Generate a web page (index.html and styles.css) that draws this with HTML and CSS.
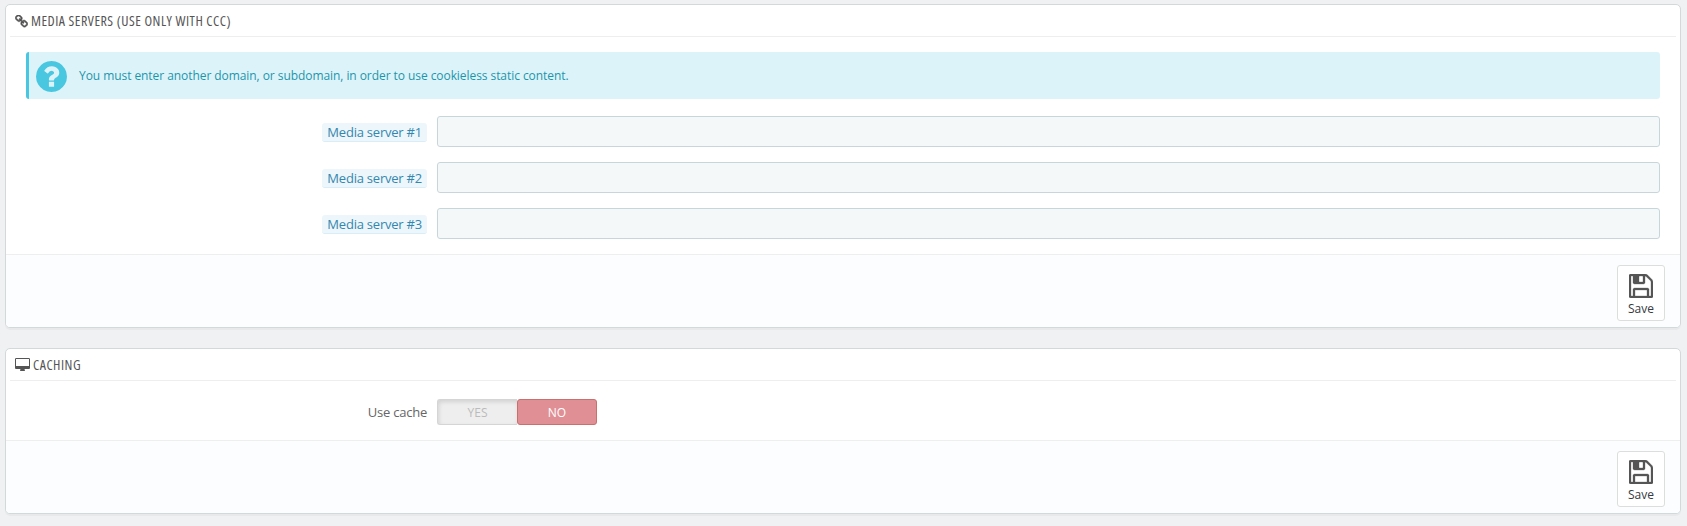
FILE: index.html
```html
<!DOCTYPE html>
<html lang="en">
<head>
    <meta charset="UTF-8">
    <meta name="viewport" content="width=device-width, initial-scale=1.0">
    <title>Performance</title>
    <link rel="stylesheet" href="styles.css">
</head>
<body>
    <form class="panel">
        <h3 class="panel-heading">
            <svg class="icon-link" viewBox="64 80 1664 1664"><path d="M1520 1216q0-40-28-68l-208-208q-28-28-68-28-42 0-72 32 3 3 19 18.500t21.500 21.500 15 19 13 25.500 3.500 27.500q0 40-28 68t-68 28q-15 0-27.500-3.500t-25.500-13-19-15-21.500-21.500-18.500-19q-33 31-33 73 0 40 28 68l206 207q27 27 68 27 40 0 68-26l147-146q28-28 28-67zm-703-705q0-40-28-68l-206-207q-28-28-68-28-39 0-68 27l-147 146q-28 28-28 67 0 40 28 68l208 208q27 27 68 27 42 0 72-31-3-3-19-18.500t-21.500-21.500-15-19-13-25.500-3.500-27.500q0-40 28-68t68-28q15 0 27.500 3.500t25.500 13 19 15 21.500 21.500 18.500 19q33-31 33-73zm895 705q0 120-85 203l-147 146q-83 83-203 83-121 0-204-85l-206-207q-83-83-83-203 0-123 88-209l-88-88q-86 88-208 88-120 0-204-84l-208-208q-84-84-84-204t85-203l147-146q83-83 203-83 121 0 204 85l206 207q83 83 83 203 0 123-88 209l88 88q86-88 208-88 120 0 204 84l208 208q84 84 84 204z"/></svg>
            <span>MEDIA SERVERS (USE ONLY WITH CCC)</span>
        </h3>
        <div class="panel-body">
            <div class="alert">
                <svg class="icon-help" viewBox="128 128 1536 1536"><path d="M1024 1376v-192q0-14-9-23t-23-9h-192q-14 0-23 9t-9 23v192q0 14 9 23t23 9h192q14 0 23-9t9-23zm256-672q0-88-55.500-163t-138.500-116-170-41q-243 0-371 213-15 24 8 42l132 100q7 6 19 6 16 0 25-12 53-68 86-92 34-24 86-24 48 0 85.500 26t37.500 59q0 38-20 61t-68 45q-63 28-115.500 86.500t-52.500 125.500v36q0 14 9 23t23 9h192q14 0 23-9t9-23q0-19 21.500-49.500t54.500-49.500q32-18 49-28.500t46-35 44.500-48 28-60.500 12.500-81zm384 192q0 209-103 385.500t-279.500 279.500-385.500 103-385.500-103-279.500-279.500-103-385.500 103-385.500 279.500-279.500 385.500-103 385.500 103 279.500 279.500 103 385.500z"/></svg>
                <span>You must enter another domain, or subdomain, in order to use cookieless static content.</span>
            </div>
            <div class="form-group">
                <label for="server1"><span class="label-tooltip">Media server #1</span></label>
                <input type="text" id="server1">
            </div>
            <div class="form-group">
                <label for="server2"><span class="label-tooltip">Media server #2</span></label>
                <input type="text" id="server2">
            </div>
            <div class="form-group">
                <label for="server3"><span class="label-tooltip">Media server #3</span></label>
                <input type="text" id="server3">
            </div>
        </div>
        <div class="panel-footer">
            <button type="button" class="btn-save">
                <svg class="icon-save" viewBox="128 128 1536 1536"><path d="M512 1536h768v-384h-768v384zm896 0h128v-896q0-14-10-38.500t-20-34.500l-281-281q-10-10-34-20t-39-10v416q0 40-28 68t-68 28h-576q-40 0-68-28t-28-68v-416h-128v1280h128v-416q0-40 28-68t68-28h832q40 0 68 28t28 68v416zm-384-928v-320q0-13-9.500-22.500t-22.500-9.500h-192q-13 0-22.500 9.500t-9.500 22.500v320q0 13 9.500 22.500t22.500 9.500h192q13 0 22.500-9.500t9.500-22.500zm640 32v928q0 40-28 68t-68 28h-1344q-40 0-68-28t-28-68v-1344q0-40 28-68t68-28h928q40 0 88 20t76 48l280 280q28 28 48 76t20 88z"/></svg>
                <span>Save</span>
            </button>
        </div>
    </form>

    <form class="panel">
        <h3 class="panel-heading">
            <svg class="icon-desktop" viewBox="-64 0 1920 1664"><path d="M1728 992v-832q0-13-9.500-22.500t-22.500-9.500h-1600q-13 0-22.500 9.500t-9.500 22.500v832q0 13 9.500 22.500t22.500 9.500h1600q13 0 22.500-9.500t9.500-22.500zm128-832v1088q0 66-47 113t-113 47h-544q0 37 16 77.500t32 71 16 43.500q0 26-19 45t-45 19h-512q-26 0-45-19t-19-45q0-14 16-44t32-70 16-78h-544q-66 0-113-47t-47-113v-1088q0-66 47-113t113-47h1600q66 0 113 47t47 113z"/></svg>
            <span>CACHING</span>
        </h3>
        <div class="panel-body">
            <div class="form-group switch-group">
                <label>Use cache</label>
                <div class="switch">
                    <span class="switch-yes">YES</span>
                    <span class="switch-no">NO</span>
                </div>
            </div>
        </div>
        <div class="panel-footer">
            <button type="button" class="btn-save">
                <svg class="icon-save" viewBox="128 128 1536 1536"><path d="M512 1536h768v-384h-768v384zm896 0h128v-896q0-14-10-38.500t-20-34.500l-281-281q-10-10-34-20t-39-10v416q0 40-28 68t-68 28h-576q-40 0-68-28t-28-68v-416h-128v1280h128v-416q0-40 28-68t68-28h832q40 0 68 28t28 68v416zm-384-928v-320q0-13-9.500-22.500t-22.500-9.500h-192q-13 0-22.500 9.500t-9.500 22.500v320q0 13 9.500 22.500t22.500 9.500h192q13 0 22.500-9.500t9.500-22.500zm640 32v928q0 40-28 68t-68 28h-1344q-40 0-68-28t-28-68v-1344q0-40 28-68t68-28h928q40 0 88 20t76 48l280 280q28 28 48 76t20 88z"/></svg>
                <span>Save</span>
            </button>
        </div>
    </form>
</body>
</html>
```
FILE: styles.css
```css
* {
    box-sizing: border-box;
}

body {
    margin: 0;
    padding: 4px 6px 0 5px;
    font-family: "Open Sans", sans-serif;
    font-size: 12px;
    color: #555;
    background-color: #eff1f2;
}

.panel {
    margin-bottom: 20px;
    border: 1px solid #d3d8db;
    border-radius: 5px;
    background-color: #fff;
    box-shadow: rgba(0, 0, 0, 0.03) 0 2px 0;
    overflow: hidden;
}

.panel-heading {
    display: flex;
    align-items: center;
    height: 32px;
    margin: 0 4px;
    padding-left: 5px;
    border-bottom: 1px solid #eee;
    font-size: 14px;
    font-weight: 400;
    font-stretch: 75%;
    letter-spacing: 0.5px;
    white-space: nowrap;
}

svg {
    flex: none;
    fill: currentColor;
}

.icon-link {
    width: 13px;
    height: 13px;
    margin: 1px 3px 0 0;
    stroke: currentColor;
    stroke-width: 50;
}

.icon-desktop {
    width: 15px;
    height: 13px;
    margin-right: 3px;
}

.panel-body {
    padding: 15px 20px 0;
}

.alert {
    display: flex;
    align-items: center;
    height: 47px;
    margin-bottom: 17px;
    padding-left: 7px;
    border-left: 3px solid #4ac7e0;
    border-radius: 3px;
    background-color: #dcf4f9;
    letter-spacing: -0.065px;
    color: #1e94ab;
}

.icon-help {
    width: 31px;
    height: 31px;
    margin: 1px 12px 0 0;
    color: #4ac7e0;
}

.form-group {
    display: flex;
    align-items: center;
    height: 31px;
    margin-bottom: 15px;
}

.form-group label {
    display: flex;
    justify-content: flex-end;
    flex: none;
    width: 401px;
    margin-right: 10px;
    font-size: 13px;
    letter-spacing: -0.22px;
    color: #666;
}

.label-tooltip {
    height: 19px;
    margin-top: 2px;
    padding: 0 5px;
    border-bottom: 1px solid #d8edf7;
    border-radius: 3px;
    background-color: #edf7fb;
    line-height: 18px;
    color: #3586ae;
}

.form-group input {
    flex: 1;
    height: 31px;
    border: 1px solid #c7d6db;
    border-radius: 3px;
    background-color: #f5f8f9;
}

.switch-group {
    height: 26px;
    margin: 3px 0 15px;
}

.switch {
    display: flex;
    width: 160px;
    height: 26px;
    border-radius: 3px;
    line-height: 26px;
    text-align: center;
}

.switch-yes {
    width: 80px;
    border: 1px solid #d5d5d5;
    border-right: none;
    border-radius: 3px 0 0 3px;
    background-color: #eee;
    box-shadow: rgba(0, 0, 0, 0.12) 1px 2px 4px inset;
    color: #bbb;
}

.switch-no {
    width: 80px;
    border: 1px solid #ca6f6f;
    border-radius: 3px;
    background-color: #e08f95;
    color: #fff;
}

.panel-footer {
    display: flex;
    justify-content: flex-end;
    height: 73px;
    padding: 10px 15px 0 0;
    border-top: 1px solid #eee;
    background-color: #fcfdfe;
}

.btn-save {
    display: flex;
    flex-direction: column;
    align-items: center;
    width: 48px;
    height: 56px;
    padding: 8px 0 0;
    border: 1px solid #ddd;
    border-radius: 3px;
    background-color: #fff;
    font-family: inherit;
    font-size: 12px;
    line-height: 17px;
    color: #363a41;
}

.icon-save {
    width: 24px;
    height: 24px;
    margin-bottom: 2px;
    color: #555;
    stroke: currentColor;
    stroke-width: 20;
}
```
